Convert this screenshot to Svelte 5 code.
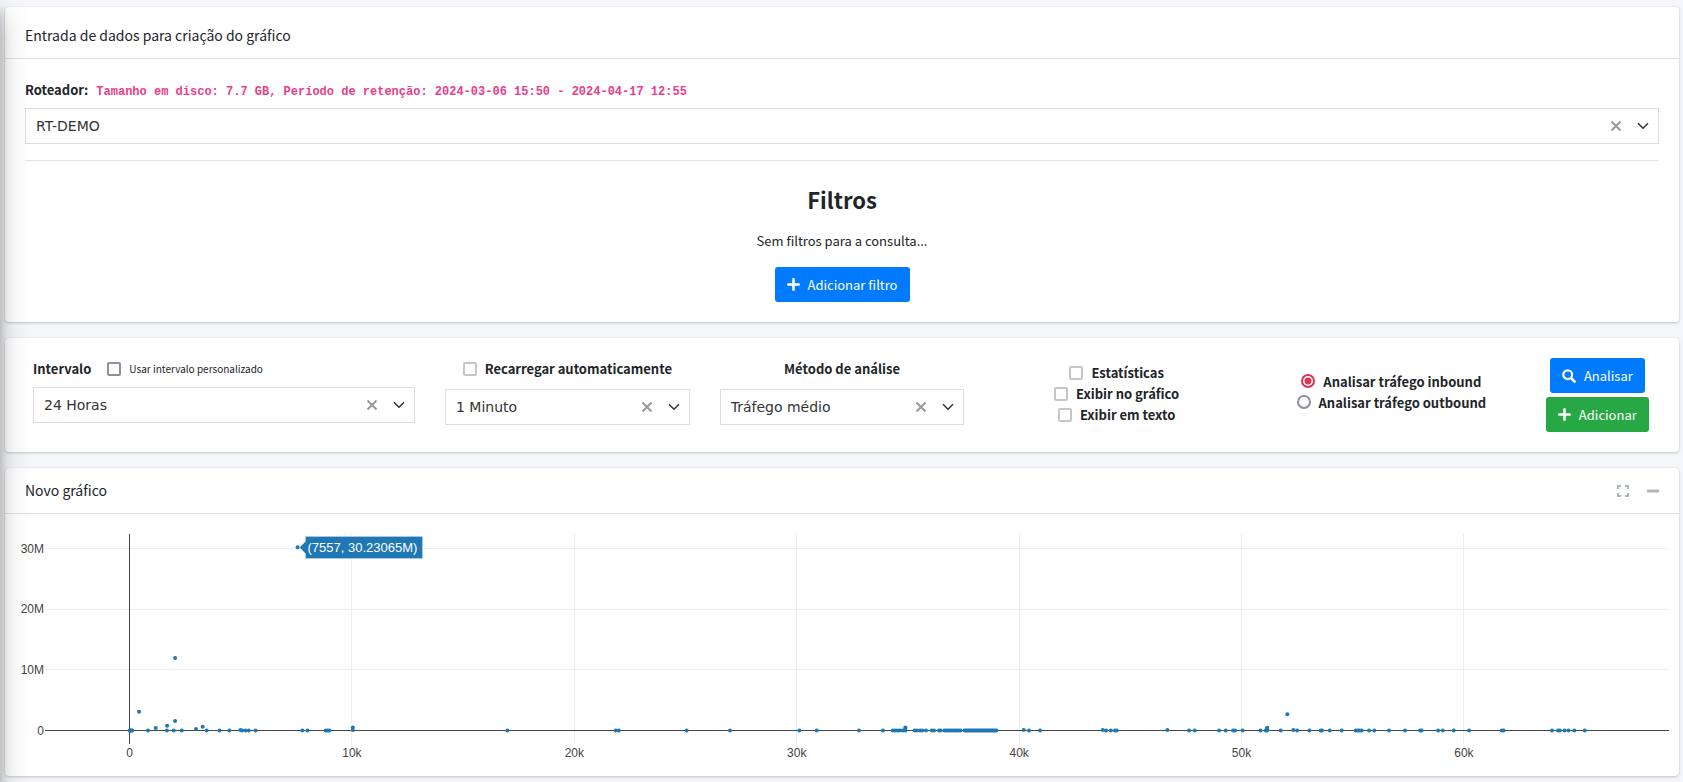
<script lang="ts">
    let router = 'RT-DEMO';
    let interval = '24 Horas';
    let reload = '1 Minuto';
    let method = 'Tráfego médio';
    let direction = 'inbound';
    let customInterval = false;

    const outputs = ['Estatísticas', 'Exibir no gráfico', 'Exibir em texto'];

    // plot area, relative to the svg
    let width = 1674;
    const left = 40;
    const right = 10;
    const top = 20;
    const zero = 216.5;
    const bottom = 230;
    const minX = -3800;
    const maxX = 69220;

    const xTicks = [0, 10, 20, 30, 40, 50, 60];
    const yTicks = [10, 20, 30];

    // ports with almost no traffic
    const flat = [
        0, 22, 53, 80, 123, 830, 1680, 1990, 2350, 3470, 4050, 4490, 5060, 5210, 5360, 5670,
        7770, 8000, 8820, 8910, 8990, 16990, 21860, 22000, 25050, 27000, 30120, 30900,
        32800, 33880, 34315, 34420, 34525, 34630, 34765, 34885, 35305, 35410, 35545, 35650,
        35815, 36070, 36175, 36400, 36470, 40445, 40940, 43905, 44120, 44310, 44385,
        47640, 47895, 48990, 49290, 49620, 49710, 50050, 50850, 51090, 51150, 51760, 52500,
        53050, 53560, 53620, 53965, 54500, 55135, 55225, 55300, 55400, 55735, 55970, 56630,
        57350, 58030, 58100, 58840, 59050, 59540, 60230, 61700, 61790, 63960, 64230, 64310,
        64520, 64700, 64965, 65430
    ];
    // [port, megabytes]
    const peaks = [
        [430, 3.1], [1180, 0.4], [1690, 0.8], [2050, 1.55], [2050, 11.95], [2990, 0.25],
        [3290, 0.6], [4985, 0.1], [7557, 30.23], [10040, 0.5], [10040, 0.1], [34885, 0.5],
        [34885, 0.25], [40205, 0.1], [43760, 0.08], [46665, 0.08], [51150, 0.45],
        [51150, 0.2], [52060, 2.7], [52330, 0.1]
    ];

    let points = [...flat.map((p) => [p, 0]), ...peaks];
    for (let p = 36640; p <= 37430; p += 80) points.push([p, 0]);
    for (let p = 37540; p <= 39010; p += 60) points.push([p, 0]);

    $: sx = (v) => left + ((v - minX) / (maxX - minX)) * (width - left - right);
    const sy = (m) => zero - m * 6.06;
    // keeps one pixel lines sharp
    const crisp = (v) => Math.floor(v) + 0.5;
</script>

{#snippet tools(clear)}
    <button class="clear" type="button" aria-label="Limpar" on:click={clear}>
        <svg width="12" height="12" viewBox="0 0 12 12"><path d="M1.5 1.5l9 9M10.5 1.5l-9 9" /></svg>
    </button>
    <svg class="chevron" width="12" height="8" viewBox="0 0 12 8"><path d="M1 1.2l5 5 5-5" /></svg>
{/snippet}

{#snippet plus()}
    <svg class="icon" width="13" height="13" viewBox="0 0 13 13"><path d="M6.5 1.3v10.4M1.3 6.5h10.4" stroke="#fff" stroke-width="2.6" stroke-linecap="round" /></svg>
{/snippet}

<div class="sidebar-shadow"></div>
<main>
    <section class="card">
        <header class="tall"><h3>Entrada de dados para criação do gráfico</h3></header>
        <div class="body">
            <label class="bold router" for="router">
                Roteador: <code>Tamanho em disco: 7.7 GB, Período de retenção: 2024-03-06 15:50 - 2024-04-17 12:55</code>
            </label>
            <div class="picker">
                <select id="router" bind:value={router}>
                    <option>RT-DEMO</option>
                </select>
                {@render tools(() => (router = ''))}
            </div>
            <hr />
            <div class="filters">
                <h2>Filtros</h2>
                <p>Sem filtros para a consulta...</p>
                <button class="btn blue" type="button">{@render plus()}Adicionar filtro</button>
            </div>
        </div>
    </section>

    <section class="card options">
        <div class="col">
            <div class="line first">
                <label class="bold" for="interval">Intervalo</label>
                <label class="small"><input class="dark" type="checkbox" bind:checked={customInterval} />Usar intervalo personalizado</label>
            </div>
            <div class="picker">
                <select id="interval" bind:value={interval}>
                    <option>24 Horas</option>
                </select>
                {@render tools(() => (interval = ''))}
            </div>
        </div>
        <div class="col">
            <div class="line">
                <label class="bold"><input type="checkbox" />Recarregar automaticamente</label>
            </div>
            <div class="picker">
                <select aria-label="Recarregar a cada" bind:value={reload}>
                    <option>1 Minuto</option>
                </select>
                {@render tools(() => (reload = ''))}
            </div>
        </div>
        <div class="col">
            <div class="line">
                <label class="bold" for="method">Método de análise</label>
            </div>
            <div class="picker">
                <select id="method" bind:value={method}>
                    <option>Tráfego médio</option>
                </select>
                {@render tools(() => (method = ''))}
            </div>
        </div>
        <div class="col stack outputs">
            {#each outputs as output}
                <label class="bold"><input type="checkbox" />{output}</label>
            {/each}
        </div>
        <div class="col stack">
            {#each ['inbound', 'outbound'] as dir}
                <label class="bold"><input type="radio" name="direction" value={dir} bind:group={direction} />Analisar tráfego {dir}</label>
            {/each}
        </div>
        <div class="col actions">
            <button class="btn blue" type="button">
                <svg class="icon" width="14" height="14" viewBox="0 0 14 14"><circle cx="5.7" cy="5.7" r="4.4" fill="none" stroke="#fff" stroke-width="2.2" /><path d="M9.2 9.2l3.4 3.4" stroke="#fff" stroke-width="2.7" stroke-linecap="round" /></svg>Analisar
            </button>
            <button class="btn green" type="button">{@render plus()}Adicionar</button>
        </div>
    </section>

    <section class="card">
        <header>
            <h3>Novo gráfico</h3>
            <div class="window">
                <button type="button" aria-label="Tela cheia">
                    <svg width="12" height="12" viewBox="0 0 12 12"><path d="M1 4V1h3M8 1h3v3M11 8v3H8M4 11H1V8" fill="none" stroke="#adb5bd" stroke-width="2" /></svg>
                </button>
                <button type="button" aria-label="Minimizar">
                    <svg width="12" height="12" viewBox="0 0 12 12"><rect y="4.5" width="12" height="3" rx="1" fill="#adb5bd" /></svg>
                </button>
            </div>
        </header>
        <div class="chart" bind:clientWidth={width}>
            <svg {width} height="262">
                {#each yTicks as t}
                    <line x1={left} x2={width - right} y1={crisp(sy(t))} y2={crisp(sy(t))} />
                    <text x="39" y={sy(t) + 4} text-anchor="end">{t}M</text>
                {/each}
                {#each xTicks as t}
                    <line class:axis={t === 0} x1={crisp(sx(t * 1000))} x2={crisp(sx(t * 1000))} y1={top} y2={bottom} />
                    <text x={sx(t * 1000)} y="243" text-anchor="middle">{t ? t + 'k' : '0'}</text>
                {/each}
                <line class="axis" x1={left} x2={width - right} y1={zero} y2={zero} />
                <text x="39" y={zero + 4} text-anchor="end">0</text>
                {#each points as [port, mb]}
                    <circle class="dot" cx={sx(port)} cy={sy(mb)} r="2" />
                {/each}
                <g class="tip" transform="translate({crisp(sx(7557))} 33.5)">
                    <path d="M2 0l6-6v-5h117v22H8V6z" />
                    <text x="10" y="4">(7557, 30.23065M)</text>
                </g>
            </svg>
        </div>
    </section>
</main>

<style>
    :global(body){
        background: #f4f6f9;
    }

    main{
        display: flex;
        flex-direction: column;
        gap: 16px;
        padding: 7px 4px 6px 5px;
        color: #212529;
        font: 13px/21px "Source Sans Pro", "Noto Sans CJK JP", sans-serif;
    }

    /* shadow of the menu that sits left of the page */
    .sidebar-shadow{
        position: fixed;
        z-index: 1;
        top: 0;
        bottom: 0;
        left: -250px;
        width: 250px;
        pointer-events: none;
        box-shadow: 0 14px 28px rgba(0,0,0,.25), 0 10px 10px rgba(0,0,0,.22);
    }

    .card{
        background: #fff;
        border-radius: 4px;
        box-shadow: 0 0 1px rgba(0,0,0,.125), 0 1px 3px rgba(0,0,0,.2);
    }

    header{
        display: flex;
        align-items: center;
        justify-content: space-between;
        padding: 0 20px;
        height: 45px;
        border-bottom: 1px solid #dfdfdf;
    }

    header.tall{
        height: 45px;
        padding-top: 6px;
    }

    h3{
        margin: 0;
        font-size: 14px;
        font-weight: 400;
    }

    .body{
        padding: 20px;
    }

    .bold{
        font-weight: 700;
    }

    .router{
        align-items: baseline;
        gap: 8px;
        margin-bottom: 8px;
    }

    code{
        color: #e83e8c;
        font-family: "Liberation Mono", monospace;
        font-size: 12px;
        line-height: 14px;
    }

    .picker{
        display: flex;
        align-items: center;
        height: 34px;
        padding-right: 9px;
        border: 1px solid #ddd;
        background: #fff;
    }

    .picker select{
        flex: 1;
        min-width: 0;
        height: 34px;
        padding: 0 10px;
        border: 0;
        background: none;
        appearance: none;
        color: #333;
        font: 14px "DejaVu Sans", sans-serif;
    }

    .clear{
        display: flex;
        margin-right: 15px;
        padding: 0;
        border: 0;
        background: none;
    }

    .clear path{
        stroke: #999;
        stroke-width: 2;
    }

    .chevron path{
        fill: none;
        stroke: #333;
        stroke-width: 1.5;
    }

    hr{
        margin: 16px 0;
        border: 0;
        border-top: 1px solid #e5e5e5;
    }

    .filters{
        display: flex;
        flex-direction: column;
        align-items: center;
    }

    h2{
        margin: 6px 0 8px;
        font-size: 22px;
        line-height: 32px;
    }

    p{
        margin: 7px 0 16px;
    }

    .btn{
        display: flex;
        align-items: center;
        gap: 8px;
        height: 35px;
        padding: 0 12px;
        border: 0;
        border-radius: 3px;
        color: #fff;
        font: inherit;
    }

    .blue{
        background: #007bff;
    }

    .green{
        background: #28a745;
    }

    .options{
        display: grid;
        grid-template-columns: 3fr 2fr 2fr 2fr 2fr 1fr;
        padding: 20px 13px;
    }

    .col{
        min-width: 0;
        padding: 0 15px 7px;
    }

    .line{
        display: flex;
        justify-content: center;
        margin-bottom: 10px;
    }

    .line.first{
        justify-content: flex-start;
        gap: 16px;
        margin-bottom: 8px;
    }

    label{
        display: flex;
        align-items: center;
    }

    .small{
        font-size: 10px;
    }

    input{
        width: 14px;
        height: 14px;
        margin: 0 8px 0 0;
        border: 2px solid #c5c5cb;
        border-radius: 2px;
        background: #fff;
        appearance: none;
    }

    input.dark{
        border-color: #8f8f9d;
    }

    input:checked{
        background: #007bff;
    }

    input[type=radio]{
        border-color: #8f8f9d;
        border-radius: 50%;
    }

    input[type=radio]:checked{
        border-color: #dc3550;
        background: radial-gradient(#dc3550 3px, #fff 4px);
    }

    .stack{
        display: flex;
        flex-direction: column;
        align-items: center;
        justify-content: center;
    }

    .outputs{
        justify-content: flex-end;
    }

    .actions{
        display: flex;
        flex-direction: column;
        align-items: center;
        gap: 4px;
        padding: 0;
    }

    .window{
        display: flex;
        gap: 18px;
    }

    .window button{
        display: flex;
        padding: 0;
        border: 0;
        background: none;
    }

    .chart{
        overflow: hidden;
    }

    .chart svg{
        display: block;
        font: 12px "Liberation Sans", Arial, sans-serif;
    }

    line{
        stroke: #eee;
    }

    line.axis{
        stroke: #444;
    }

    text{
        fill: #444;
    }

    .dot{
        fill: #1f77b4;
    }

    .tip path{
        fill: #1f77b4;
        stroke: #a5c9e1;
    }

    .tip text{
        fill: #fff;
        font-size: 13px;
    }
</style>
